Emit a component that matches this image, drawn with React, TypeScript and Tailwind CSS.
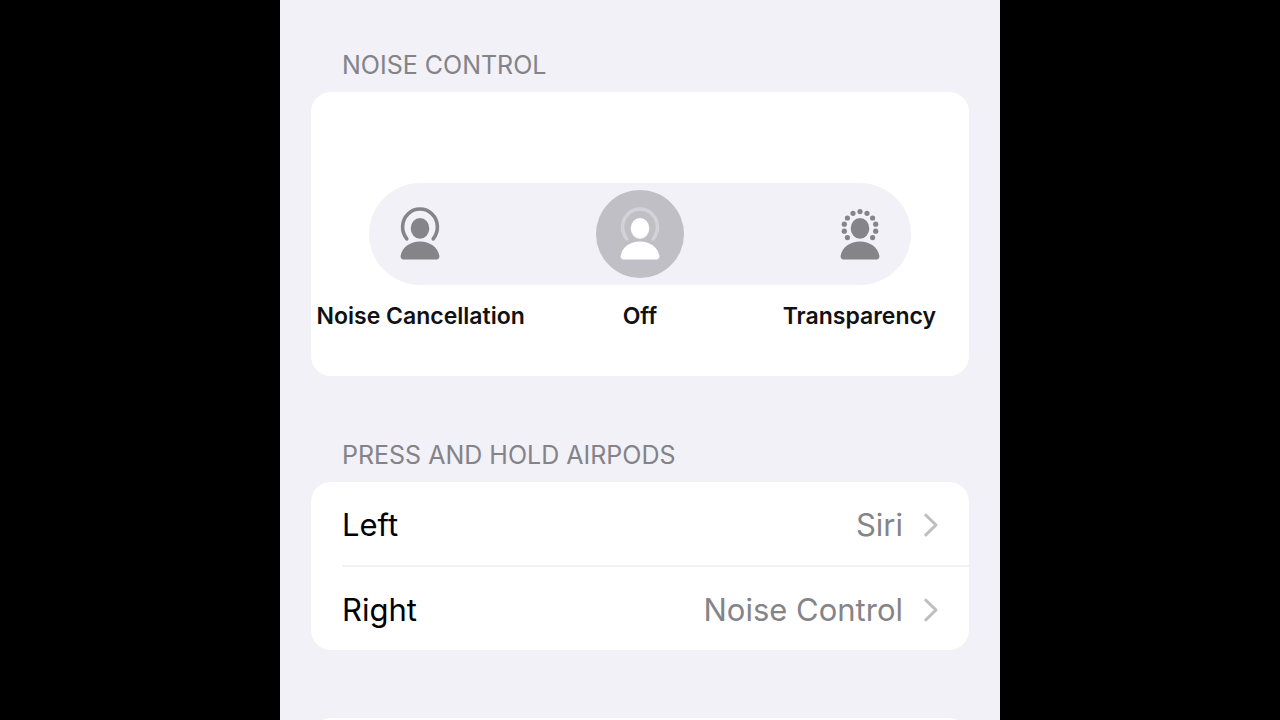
import { useState } from "react";
import type { ReactNode } from "react";

type Mode = "cancellation" | "off" | "transparency";

const modes: { id: Mode; label: string }[] = [
  { id: "cancellation", label: "Noise Cancellation" },
  { id: "off", label: "Off" },
  { id: "transparency", label: "Transparency" },
];

const pressActions = [
  { side: "Left", action: "Siri" },
  { side: "Right", action: "Noise Control" },
];

// dots around the head in the transparency icon
const dots = [
  [20, 4.6],
  [13, 6.3],
  [27, 6.3],
  [7.4, 11],
  [32.6, 11],
  [4.3, 17.2],
  [35.7, 17.2],
  [4.3, 24.2],
  [35.7, 24.2],
  [7.4, 30.6],
  [32.6, 30.6],
];

const PersonIcon = ({ mode }: { mode: Mode }) => (
  <svg width="40" height="54" viewBox="0 0 40 54" fill="currentColor" aria-hidden="true">
    {mode === "transparency" ? (
      dots.map(([x, y]) => <circle key={`${x}-${y}`} cx={x} cy={y} r="2.6" />)
    ) : (
      <path
        d="M6.8 31.8 A17.4 18 0 1 1 33.2 31.8"
        fill="none"
        stroke="currentColor"
        strokeWidth="3.6"
        strokeLinecap="round"
        opacity={mode === "off" ? 0.3 : 1}
      />
    )}
    <ellipse cx="20" cy="21.3" rx="9.3" ry="10.4" />
    <path d="M20 34.6 C29.5 34.6 37.8 40 39.3 48.6 C39.7 50.8 38.8 52.4 36.6 52.4 H3.4 C1.2 52.4 0.3 50.8 0.7 48.6 C2.2 40 10.5 34.6 20 34.6 Z" />
  </svg>
);

const ChevronIcon = () => (
  <svg width="14" height="24" viewBox="0 0 14 24" fill="none" aria-hidden="true">
    <path
      d="M1.8 2.2 L12 12 L1.8 21.8"
      stroke="#bfbfc2"
      strokeWidth="3"
      strokeLinecap="round"
      strokeLinejoin="round"
    />
  </svg>
);

const SectionTitle = ({ children }: { children: ReactNode }) => (
  <h2 className="mb-[11px] px-[31px] text-[25px] leading-8 text-[#838388]">{children}</h2>
);

const NoiseControl = () => {
  const [selected, setSelected] = useState<Mode>("off");

  return (
    <section>
      <SectionTitle>NOISE CONTROL</SectionTitle>
      <div className="rounded-[20px] bg-white pt-[91px] pb-11">
        <div
          role="radiogroup"
          aria-label="Noise control"
          className="mx-[58px] flex justify-between rounded-full bg-[#f2f1f7] p-[7px]"
        >
          {modes.map(({ id }) => (
            <label
              key={id}
              className="flex size-[88px] cursor-pointer items-center justify-center rounded-full text-[#858489] has-checked:bg-[#c0bfc5] has-checked:text-white"
            >
              <input
                type="radio"
                id={id}
                name="noise-control"
                aria-labelledby={`${id}-label`}
                className="sr-only"
                checked={selected === id}
                onChange={() => setSelected(id)}
              />
              <PersonIcon mode={id} />
            </label>
          ))}
        </div>
        <div className="mt-[15px] grid grid-cols-3 text-center text-[23px] leading-8 font-semibold text-[#111113]">
          {modes.map(({ id, label }) => (
            <label
              key={id}
              id={`${id}-label`}
              htmlFor={id}
              className="cursor-pointer whitespace-nowrap"
            >
              {label}
            </label>
          ))}
        </div>
      </div>
    </section>
  );
};

const PressAndHold = () => (
  <section className="mt-[63px]">
    <SectionTitle>PRESS AND HOLD AIRPODS</SectionTitle>
    <ul className="divide-y-2 divide-[#f1f1f2] rounded-[20px] bg-white pl-[31px] text-[31px] leading-10">
      {pressActions.map(({ side, action }) => (
        <li key={side}>
          <button
            type="button"
            className="flex w-full cursor-pointer items-center pt-[23px] pr-[31px] pb-5 text-left"
          >
            <span className="flex-1 text-black">{side}</span>
            <span className="mr-[21px] text-[#858489]">{action}</span>
            <ChevronIcon />
          </button>
        </li>
      ))}
    </ul>
  </section>
);

const App = () => (
  <div className="flex min-h-screen justify-center bg-black font-['Inter','Liberation_Sans',sans-serif]">
    <main className="flex w-full max-w-[720px] flex-col bg-[#f2f1f7] px-[31px] pt-[49px]">
      <NoiseControl />
      <PressAndHold />
      {/* next group, only its top edge shows until the window is taller */}
      <div className="mt-[68px] min-h-0 grow basis-[0px] overflow-hidden">
        <div className="h-[84px] rounded-[20px] bg-white" />
      </div>
    </main>
  </div>
);

export default App;
